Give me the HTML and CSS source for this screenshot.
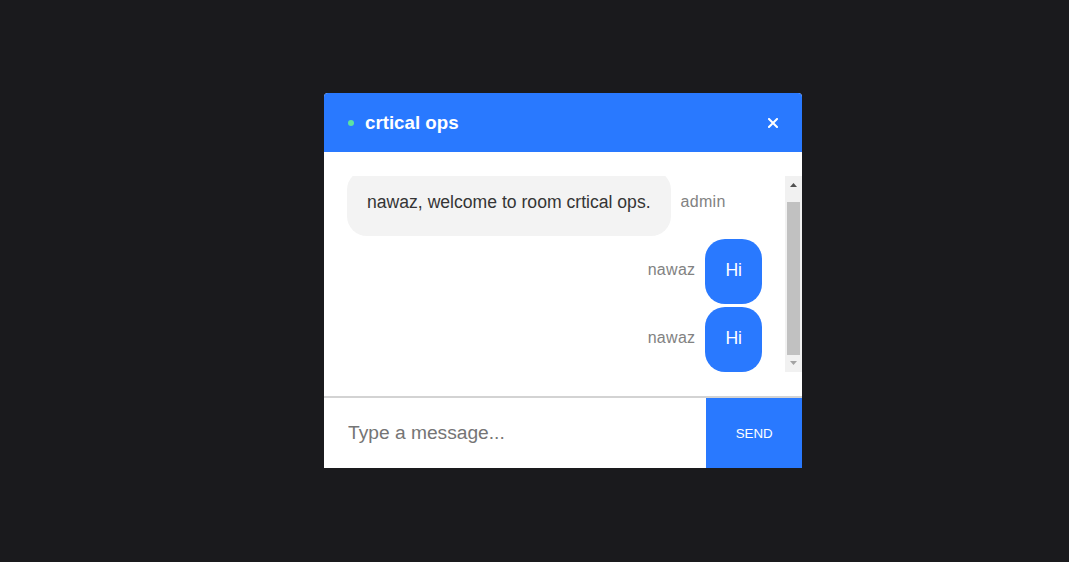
FILE: index.html
```html
<!DOCTYPE html>
<html>
<head>
<meta charset="utf-8">
<link rel="stylesheet" href="styles.css">
</head>
<body>
<div class="page">
  <div class="chat">
    <div class="infobar">
      <div class="left">
        <span class="online"></span>
        <h3 class="title">crtical ops</h3>
      </div>
      <div class="right">
        <svg class="close" width="10" height="10" viewBox="0 0 10 10"><path d="M1 1L9 9M9 1L1 9" stroke="#fff" stroke-width="2" stroke-linecap="square"/></svg>
      </div>
    </div>
    <div class="messages-wrap">
      <div class="messages">
        <div class="list">
          <div class="msg start">
            <div class="box light"><p class="text dark">nawaz, welcome to room crtical ops.</p></div>
            <p class="sent pl">admin</p>
          </div>
          <div class="msg end">
            <p class="sent pr">nawaz</p>
            <div class="box blue"><p class="text white">Hi</p></div>
          </div>
          <div class="msg end">
            <p class="sent pr">nawaz</p>
            <div class="box blue"><p class="text white">Hi</p></div>
          </div>
        </div>
      </div>
      <div class="scrollbar" aria-hidden="true">
        <div class="sb-btn">
          <svg width="17" height="17" viewBox="0 0 17 17"><path d="M5 11h7L8.5 7z" fill="#505050"/></svg>
        </div>
        <div class="sb-track">
          <div class="sb-thumb"></div>
        </div>
        <div class="sb-btn">
          <svg width="17" height="17" viewBox="0 0 17 17"><path d="M5 6h7L8.5 10z" fill="#A3A3A3"/></svg>
        </div>
      </div>
    </div>
    <form class="form">
      <input class="input" type="text" placeholder="Type a message...">
      <button class="send" type="button">Send</button>
    </form>
  </div>
</div>
</body>
</html>
```
FILE: styles.css
```css
html, body {
  margin: 0;
  padding: 0;
  background: #1A1A1D;
  font-family: "Liberation Sans", Arial, sans-serif;
}
.page {
  height: 562px;
  display: flex;
  align-items: flex-start;
  padding: 93px 0 0 324px;
  box-sizing: border-box;
}
.chat {
  width: 478px;
  height: 375px;
  background: #fff;
  border-radius: 4px 4px 0 0;
  display: flex;
  flex-direction: column;
}
.infobar {
  height: 59px;
  flex: none;
  background: #2979FF;
  border-radius: 4px 4px 0 0;
  display: flex;
  align-items: center;
  justify-content: space-between;
}
.left {
  display: flex;
  align-items: center;
  margin-left: 24px;
  color: #fff;
}
.online {
  width: 6px;
  height: 6px;
  border-radius: 50%;
  background: #5EE3A1;
  margin-right: 11px;
  margin-top: 1px;
}
.title {
  margin: 0;
  font-size: 18.72px;
  font-weight: bold;
}
.right {
  margin-right: 24px;
  display: flex;
}
.close { display: block; }
.messages-wrap {
  flex: auto;
  margin: 24px 0;
  min-height: 0;
  display: flex;
}
.messages {
  flex: auto;
  min-width: 0;
  overflow: hidden;
  display: flex;
  flex-direction: column-reverse;
}
.scrollbar {
  flex: none;
  width: 17px;
  background: #F1F1F1;
  display: flex;
  flex-direction: column;
}
.sb-btn {
  height: 17px;
  flex: none;
}
.sb-btn svg { display: block; }
.sb-track {
  flex: auto;
  padding: 9px 2px 0;
  display: flex;
  flex-direction: column;
}
.sb-thumb {
  flex: auto;
  background: #C1C1C1;
}
.list { flex: none; }
.msg {
  display: flex;
  padding: 0 23px;
  margin-top: 3px;
}
.msg.start { justify-content: flex-start; }
.msg.end { justify-content: flex-end; }
.box {
  border-radius: 20px;
  padding: 5px 20px;
  display: inline-block;
  max-width: 80%;
}
.light { background: #F3F3F3; }
.blue { background: #2979FF; }
.text {
  font-size: 17.6px;
  margin: 16.6px 0 18.6px;
  line-height: 20px;
  letter-spacing: 0;
}
.dark { color: #353535; }
.white { color: #fff; }
.sent {
  display: flex;
  align-items: center;
  margin: 0 0 3px;
  color: #828282;
  font-size: 16px;
  letter-spacing: 0.3px;
}
.pl { padding-left: 10px; }
.pr { padding-right: 10px; }
.form {
  display: flex;
  border-top: 2px solid #D3D3D3;
  margin: 0;
  flex: none;
  height: 70px;
}
.input {
  border: none;
  border-radius: 0;
  padding: 0 24px;
  width: 80%;
  box-sizing: border-box;
  font-size: 19.2px;
  font-family: "Liberation Sans", Arial, sans-serif;
  outline: none;
  color: #333;
}
.input::placeholder { color: #757575; }
.send {
  width: 20%;
  border: none;
  background: #2979FF;
  color: #fff;
  text-transform: uppercase;
  font-family: "Liberation Sans", Arial, sans-serif;
  font-size: 13.33px;
  padding: 0;
  margin: 0;
}
```
